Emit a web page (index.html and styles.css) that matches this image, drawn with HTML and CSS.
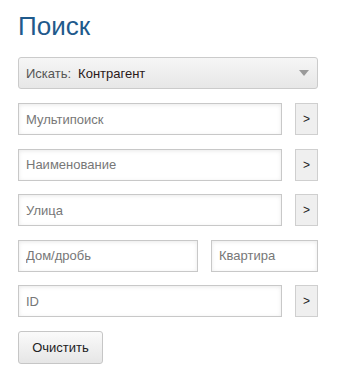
FILE: index.html
```html
<!DOCTYPE html>
<html lang="ru">
<head>
<meta charset="utf-8">
<title>Поиск</title>
<link rel="stylesheet" href="styles.css">
</head>
<body>
<div class="search">
  <h1 class="title">Поиск</h1>
  <div class="select">
    <span class="select-label">Искать:</span>
    <span class="select-value">Контрагент</span>
    <span class="select-arrow"></span>
  </div>
  <div class="row">
    <input class="field" type="text" placeholder="Мультипоиск">
    <button class="go" type="button">&gt;</button>
  </div>
  <div class="row">
    <input class="field" type="text" placeholder="Наименование">
    <button class="go" type="button">&gt;</button>
  </div>
  <div class="row">
    <input class="field" type="text" placeholder="Улица">
    <button class="go" type="button">&gt;</button>
  </div>
  <div class="row">
    <input class="field field-house" type="text" placeholder="Дом/дробь">
    <input class="field field-flat" type="text" placeholder="Квартира">
  </div>
  <div class="row">
    <input class="field" type="text" placeholder="ID">
    <button class="go" type="button">&gt;</button>
  </div>
  <button class="clear" type="button">Очистить</button>
</div>
</body>
</html>
```

FILE: styles.css
```css
html, body {
  margin: 0;
  padding: 0;
  background: #fff;
}
body {
  font-family: "Liberation Sans", Arial, sans-serif;
  font-size: 13px;
  color: #333;
}
.search {
  width: 300px;
  padding: 0 0 0 18px;
  display: flex;
  flex-direction: column;
}
.title {
  margin: 9px 0 0 0;
  height: 48px;
  font-size: 26px;
  line-height: 34px;
  font-weight: normal;
  color: #1f5a8c;
}
.select {
  box-sizing: border-box;
  height: 32px;
  border: 1px solid #cbcbcb;
  border-radius: 3px;
  background: linear-gradient(#f6f6f6, #e7e7e7);
  display: flex;
  align-items: center;
  padding: 0 8px 0 7px;
  margin-bottom: 14px;
}
.select-label {
  color: #555;
  margin-right: 7px;
}
.select-value {
  color: #2a1818;
  flex: 1;
}
.select-arrow {
  width: 0;
  height: 0;
  border-left: 5px solid transparent;
  border-right: 5px solid transparent;
  border-top: 6px solid #9a9a9a;
}
.row {
  display: flex;
  gap: 13px;
  height: 32px;
  margin-bottom: 13.5px;
}
.field {
  box-sizing: border-box;
  height: 32px;
  flex: 1;
  min-width: 0;
  margin: 0;
  border: 1px solid #c8c8c8;
  border-radius: 0;
  background: #fff;
  box-shadow: inset 0 1px 4px rgba(0, 0, 0, 0.09);
  padding: 0 7px;
  font-family: "Liberation Sans", Arial, sans-serif;
  font-size: 13px;
  color: #333;
  outline: none;
}
.field::placeholder {
  color: #777;
}
.field-house {
  flex: 0 0 180px;
}
.field-flat {
  flex: 1;
}
.go {
  box-sizing: border-box;
  width: 23px;
  height: 32px;
  margin: 0;
  padding: 0;
  border: 1px solid #cfcfcf;
  background: #efefef;
  font-family: "Liberation Sans", Arial, sans-serif;
  font-size: 12px;
  color: #222;
}
.clear {
  align-self: flex-start;
  box-sizing: border-box;
  width: 85px;
  height: 33px;
  margin: 0.5px 0 0 0;
  padding: 0;
  border: 1px solid #c6c6c6;
  border-radius: 3px;
  background: linear-gradient(#fafafa, #e6e6e6);
  font-family: "Liberation Sans", Arial, sans-serif;
  font-size: 13px;
  color: #222;
}
```
